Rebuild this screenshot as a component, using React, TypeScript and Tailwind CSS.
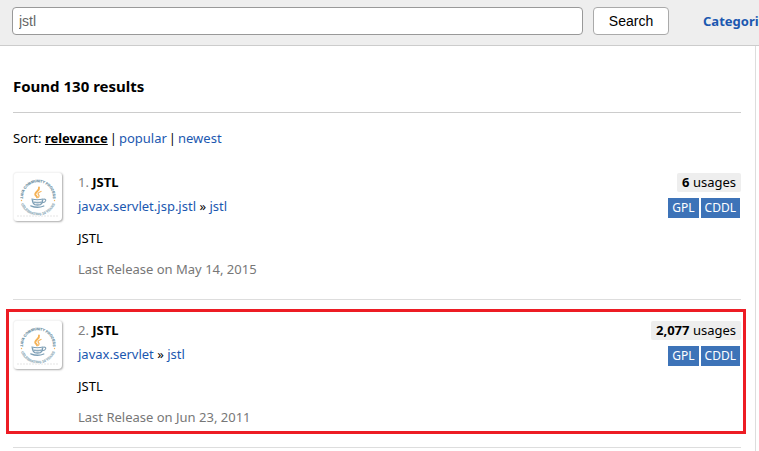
import { useState } from 'react'

type Artifact = {
  rank: number
  title: string
  group: string
  name: string
  description: string
  released: string
  usages: string
  licenses: string[]
  highlighted?: boolean
}

const artifacts: Artifact[] = [
  {
    rank: 1,
    title: 'JSTL',
    group: 'javax.servlet.jsp.jstl',
    name: 'jstl',
    description: 'JSTL',
    released: 'May 14, 2015',
    usages: '6',
    licenses: ['GPL', 'CDDL'],
  },
  {
    rank: 2,
    title: 'JSTL',
    group: 'javax.servlet',
    name: 'jstl',
    description: 'JSTL',
    released: 'Jun 23, 2011',
    usages: '2,077',
    licenses: ['GPL', 'CDDL'],
    highlighted: true,
  },
]

function JcpLogo({ id }: { id: string }) {
  return (
    <svg viewBox="0 0 48 48" className="size-12" aria-hidden="true">
      <defs>
        <path id={`${id}-top`} d="M9.5 28 A15 15 0 1 1 38.5 28" />
        <path id={`${id}-bottom`} d="M6.6 29.5 A18.2 18.2 0 0 0 41.4 29.5" />
      </defs>
      <g fontFamily="Liberation Sans, sans-serif" fontWeight="bold">
        <text fontSize="3.5" fill="#7698aa" stroke="#7698aa" strokeWidth="0.2">
          <textPath href={`#${id}-top`} startOffset="50%" textAnchor="middle">JAVA COMMUNITY PROCESS</textPath>
        </text>
        <text fontSize="3.5" fill="#9db6c3" stroke="#9db6c3" strokeWidth="0.2">
          <textPath href={`#${id}-bottom`} startOffset="50%" textAnchor="middle">CELEBRATING 10 YEARS</textPath>
        </text>
      </g>
      <circle cx="7.5" cy="27.5" r="0.7" fill="#f3b45c" />
      <circle cx="40.5" cy="27.5" r="0.7" fill="#f3b45c" />
      <g fill="none" strokeLinecap="round">
        <path d="M25 14.5 C26 18 20 19 21.4 22 C22 23 23.4 23.4 23 24.4" stroke="#f5b255" strokeWidth="1.9" />
        <path d="M27 18.5 C23.8 19.6 23.4 20.8 24.8 22 C25.4 22.8 25 23.6 24.6 24.2" stroke="#f4b55f" strokeWidth="1.3" />
        <path d="M17.8 26 Q23.4 27.6 29 26" stroke="#7d9fb6" strokeWidth="1.1" />
        <path d="M18.4 27 Q19 31 20.8 31.6 Q23.4 32.4 26.4 31.6 Q28 31 28.6 27" stroke="#7d9fb6" strokeWidth="1.5" />
        <path d="M20.6 29.2 Q23.4 30 27 29.2" stroke="#8facbf" strokeWidth="1.6" />
        <path d="M29.6 26.2 C33 25.4 32.2 29.4 28.4 29.6" stroke="#7f9fb5" strokeWidth="1.1" />
        <path d="M16.8 32.8 Q23.4 35.6 29.8 33" stroke="#7d9fb6" strokeWidth="1.3" />
      </g>
      <path d="M3 43 H45" stroke="#f2f2f2" strokeWidth="2" strokeDasharray="2 1" />
    </svg>
  )
}

function ArtifactItem({ artifact }: { artifact: Artifact }) {
  return (
    <li className="relative flex gap-4 border-b border-[#dddddd] py-5">
      {artifact.highlighted && (
        <div className="pointer-events-none absolute -left-[7px] -right-[5px] top-[9px] bottom-[13px] border-3 border-[#ed1c24]" />
      )}
      <a
        href="#artifact"
        aria-label={`${artifact.group} ${artifact.name}`}
        className="size-[49px] shrink-0 overflow-hidden rounded-[4px] border-t border-l border-[#f4f4f4] bg-white shadow-[1px_1px_2px_#aaaaaa]"
      >
        <JcpLogo id={`logo-${artifact.rank}`} />
      </a>
      <div className="min-w-0 flex-1">
        <h2>
          <span className="text-[#808080]">{artifact.rank}. </span>
          <a href="#artifact" className="font-bold text-black">{artifact.title}</a>
        </h2>
        <p className="mt-1">
          <a href="#group" className="text-[#1b58b0]">{artifact.group}</a>
          {' » '}
          <a href="#artifact" className="text-[#1b58b0]">{artifact.name}</a>
        </p>
        <p className="mt-3">{artifact.description}</p>
        <p className="mt-[11px] text-[#777777]">Last Release on {artifact.released}</p>
      </div>
      <div className="flex shrink-0 flex-col items-end gap-[6px] pt-px">
        <a href="#usages" className="rounded-[2px] bg-[#eeeeee] px-[5px] leading-[19px]">
          <b>{artifact.usages}</b> usages
        </a>
        <div className="mr-px flex gap-[2px]">
          {artifact.licenses.map(license => (
            <span key={license} className="bg-[#3d73b8] px-1 text-[12px] text-white">{license}</span>
          ))}
        </div>
      </div>
    </li>
  )
}

export default function App() {
  const [query, setQuery] = useState('jstl')

  return (
    <div className="flex min-h-screen flex-col overflow-hidden bg-white font-['Noto_Sans',sans-serif] text-[13px] leading-[20px] text-black">
      <header className="flex border-b border-[#cccccc] bg-[#eeeeee] pt-[7px] pb-[10px] pl-3">
        <form className="flex min-w-0 flex-1 gap-[10px] font-['Liberation_Sans',sans-serif] text-[14px]" onSubmit={e => e.preventDefault()}>
          <input
            type="text"
            aria-label="Search artifacts"
            value={query}
            onChange={e => setQuery(e.target.value)}
            className="h-7 min-w-0 flex-1 rounded-[4px] border border-[#999999] bg-white px-[6px] text-[#666666]"
          />
          <button type="submit" className="h-7 w-[76px] rounded-[4px] border border-[#aaaaaa] bg-white">Search</button>
        </form>
        <nav className="ml-[34px] flex w-14 shrink-0 items-center overflow-hidden">
          <a href="#categories" className="font-bold text-[#1b58b0]">Categories</a>
        </nav>
      </header>
      <main className="mr-[3px] flex-1 border-r border-[#dddddd] pt-7 pr-[14px] pl-[13px]">
        <h1 className="border-b border-[#cccccc] pb-[14px] text-[15px] leading-[24px] font-bold">Found 130 results</h1>
        <p className="mt-[15px] mb-1">
          Sort: <a href="#relevance" className="font-bold underline">relevance</a>
          <span className="px-[2px]">|</span>
          <a href="#popular" className="text-[#1b58b0]">popular</a>
          <span className="px-[2px]">|</span>
          <a href="#newest" className="text-[#1b58b0]">newest</a>
        </p>
        <ul>
          {artifacts.map(artifact => (
            <ArtifactItem key={artifact.rank} artifact={artifact} />
          ))}
        </ul>
      </main>
    </div>
  )
}
